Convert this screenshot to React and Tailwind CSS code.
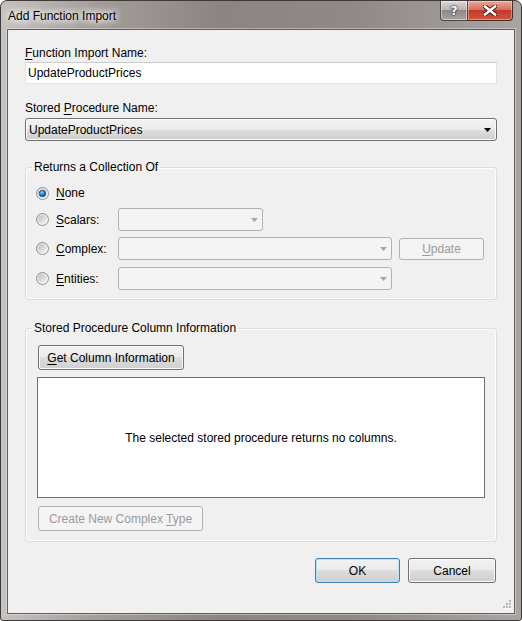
import React, { useId } from "react";

function U({ children }) {
  return <span className="underline decoration-1 underline-offset-2">{children}</span>;
}

function Arrow({ color }) {
  return (
    <svg width="7" height="4" viewBox="0 0 7 4" className="block">
      <polygon points="0,0 7,0 3.5,4" fill={color} />
    </svg>
  );
}

function Radio({ checked }) {
  const id = useId().replace(/:/g, "");
  return (
    <svg width="13" height="13" viewBox="0 0 13 13" className="block shrink-0">
      <defs>
        <linearGradient id={`o${id}`} x1="0" y1="0" x2="1" y2="1">
          <stop offset="0" stopColor="#d8d8d8" />
          <stop offset="1" stopColor="#ffffff" />
        </linearGradient>
        <linearGradient id={`i${id}`} x1="0" y1="0" x2="1" y2="1">
          <stop offset="0" stopColor="#bcbcbc" />
          <stop offset="1" stopColor="#f6f6f6" />
        </linearGradient>
        <radialGradient id={`b${id}`} cx="0.4" cy="0.35" r="0.7">
          <stop offset="0" stopColor="#8fd3ff" />
          <stop offset="0.45" stopColor="#2d8bd0" />
          <stop offset="1" stopColor="#0f3e6e" />
        </radialGradient>
      </defs>
      <circle cx="6.5" cy="6.5" r="6" fill={`url(#o${id})`} stroke="#8e8f8f" strokeWidth="1" />
      <circle cx="6.5" cy="6.5" r="4.2" fill={`url(#i${id})`} />
      {checked && <circle cx="6.5" cy="6.5" r="3.3" fill={`url(#b${id})`} stroke="#1b3d66" strokeWidth="0.6" />}
    </svg>
  );
}

function DisabledCombo({ className }) {
  return (
    <div className={`h-[23px] rounded-[3px] border border-[#adb2b5] bg-[#f4f4f4] flex items-center justify-end pr-[4px] ${className}`}>
      <Arrow color="#a6a6a6" />
    </div>
  );
}

const btnSkin =
  "rounded-[3px] border border-[#707070] bg-[linear-gradient(180deg,#f2f2f2_0%,#ebebeb_50%,#dddddd_50%,#cfcfcf_100%)] shadow-[inset_0_0_0_1px_#fbfbfb] text-black flex items-center";
const btnEnabled = `${btnSkin} justify-center`;
const btnDisabled =
  "rounded-[3px] border border-[#adb2b5] bg-[#f4f4f4] text-[#9a9a9a] flex items-center justify-center";

export default function App() {
  return (
    <div className="w-[522px] h-[621px] font-['Liberation_Sans',Arial,sans-serif] text-[12px] leading-[16px] text-black">
      <div className="w-[522px] h-[621px] rounded-t-[7px] rounded-b-[3px] border border-[#3d3a39] bg-[linear-gradient(90deg,#c6c2c0_0%,#a49e9b_18%,#8c8481_42%,#918986_68%,#a9a4a2_100%)] flex flex-col overflow-hidden">
        {/* title bar */}
        <div className="h-[28px] flex items-start">
          <div className="pl-[7px] pt-[7px] text-[12px] leading-[16px] text-black [text-shadow:0_0_6px_#fff,0_0_8px_#fff,0_0_10px_#fff]">
            Add Function Import
          </div>
          <div className="ml-auto mr-[8px] flex">
            <div className="w-[28px] h-[20px] rounded-bl-[4px] border border-t-0 border-[#4c4a49] bg-[linear-gradient(180deg,#dcdad9_0%,#b7b3b1_45%,#8f8a88_50%,#a8a3a1_100%)] shadow-[inset_0_0_0_1px_rgba(255,255,255,0.45)] flex items-center justify-center">
              <span className="font-['DejaVu_Sans',sans-serif] font-bold text-[13px] leading-[13px] text-white [text-shadow:0_0_1px_#222,0_0_1px_#222,0_0_2px_#333]">?</span>
            </div>
            <div className="w-[45px] h-[20px] rounded-br-[4px] border border-l-0 border-t-0 border-[#4c2a24] bg-[linear-gradient(180deg,#e9a99a_0%,#d5705c_45%,#c0392b_50%,#d4553a_100%)] shadow-[inset_0_0_0_1px_rgba(255,255,255,0.35)] flex items-center justify-center">
              <svg width="14" height="11" viewBox="0 0 14 11" className="block">
                <path d="M2 1.5 L12 9.5 M12 1.5 L2 9.5" stroke="#3a1a14" strokeWidth="4.4" strokeLinecap="square" />
                <path d="M2 1.5 L12 9.5 M12 1.5 L2 9.5" stroke="#ffffff" strokeWidth="2.6" strokeLinecap="square" />
              </svg>
            </div>
          </div>
        </div>

        {/* client area */}
        <div className="mx-[6px] w-[508px] h-[585px] border border-[#5e5e5e] shadow-[0_0_0_1px_rgba(255,255,255,0.35)] bg-[#f0f0f0] relative">
          <div className="px-[17px] pt-[15px] flex flex-col">
            <div>
              <U>F</U>unction Import Name:
            </div>
            <div className="mt-[1px] h-[22px] border border-[#e1e3e7] border-t-[#c9ccd1] bg-white pl-[2px] flex items-center">
              UpdateProductPrices
            </div>

            <div className="mt-[16px]">
              Stored <U>P</U>rocedure Name:
            </div>
            <div className={`mt-[2px] h-[23px] pl-[3px] pr-[5px] justify-between ${btnSkin}`}>
              <span>UpdateProductPrices</span>
              <Arrow color="#000000" />
            </div>

            <fieldset className="mt-[18px] border border-[#d5dfe5] rounded-[3px] shadow-[inset_0_0_0_1px_#fafcfd] p-0 m-0 min-w-0">
              <legend className="ml-[6px] px-[2px] leading-[16px]">Returns a Collection Of</legend>
              <div className="pl-[10px] pt-[10px] pb-[9px] flex flex-col">
                <div className="h-[16px] flex items-center">
                  <Radio checked />
                  <span className="ml-[7px]">
                    <U>N</U>one
                  </span>
                </div>
                <div className="mt-[7px] h-[23px] flex items-center">
                  <Radio />
                  <span className="ml-[7px] w-[62px]">
                    <U>S</U>calars:
                  </span>
                  <DisabledCombo className="w-[145px]" />
                </div>
                <div className="mt-[6px] h-[23px] flex items-center">
                  <Radio />
                  <span className="ml-[7px] w-[62px]">
                    <U>C</U>omplex:
                  </span>
                  <DisabledCombo className="w-[274px]" />
                  <div className={`ml-[7px] w-[85px] h-[22px] ${btnDisabled}`}>
                    <span>
                      <U>U</U>pdate
                    </span>
                  </div>
                </div>
                <div className="mt-[7px] h-[23px] flex items-center">
                  <Radio />
                  <span className="ml-[7px] w-[62px]">
                    <U>E</U>ntities:
                  </span>
                  <DisabledCombo className="w-[274px]" />
                </div>
              </div>
            </fieldset>

            <fieldset className="mt-[20px] border border-[#d5dfe5] rounded-[3px] shadow-[inset_0_0_0_1px_#fafcfd] p-0 m-0 min-w-0">
              <legend className="ml-[6px] px-[2px] leading-[16px]">Stored Procedure Column Information</legend>
              <div className="pt-[9px] pb-[10px] flex flex-col items-start">
                <div className={`ml-[12px] w-[146px] h-[25px] ${btnEnabled}`}>
                  <span>
                    <U>G</U>et Column Information
                  </span>
                </div>
                <div className="mt-[7px] ml-[11px] w-[448px] h-[121px] border border-[#6f6f6f] bg-white flex items-center justify-center">
                  The selected stored procedure returns no columns.
                </div>
                <div className={`mt-[8px] ml-[12px] w-[165px] h-[25px] ${btnDisabled}`}>
                  <span>
                    Create New Complex <U>T</U>ype
                  </span>
                </div>
              </div>
            </fieldset>

            <div className="mt-[16px] flex justify-end gap-[8px] mr-[1px]">
              <div className="w-[85px] h-[25px] rounded-[3px] border border-[#3c7fb1] bg-[linear-gradient(180deg,#f2f2f2_0%,#ebebeb_50%,#dddddd_50%,#cfcfcf_100%)] shadow-[inset_0_0_0_1px_#b9e3f9] flex items-center justify-center">
                OK
              </div>
              <div className={`w-[88px] h-[25px] ${btnEnabled}`}>Cancel</div>
            </div>
          </div>

          <svg width="11" height="11" viewBox="0 0 11 11" className="absolute right-[2px] bottom-[2px]">
            {[
              [8, 0],
              [5, 3],
              [8, 3],
              [2, 6],
              [5, 6],
              [8, 6],
            ].map(([x, y]) => (
              <g key={`${x}-${y}`}>
                <rect x={x + 1} y={y + 1} width="2" height="2" fill="#ffffff" />
                <rect x={x} y={y} width="2" height="2" fill="#b5b5b5" />
              </g>
            ))}
          </svg>
        </div>
      </div>
    </div>
  );
}
